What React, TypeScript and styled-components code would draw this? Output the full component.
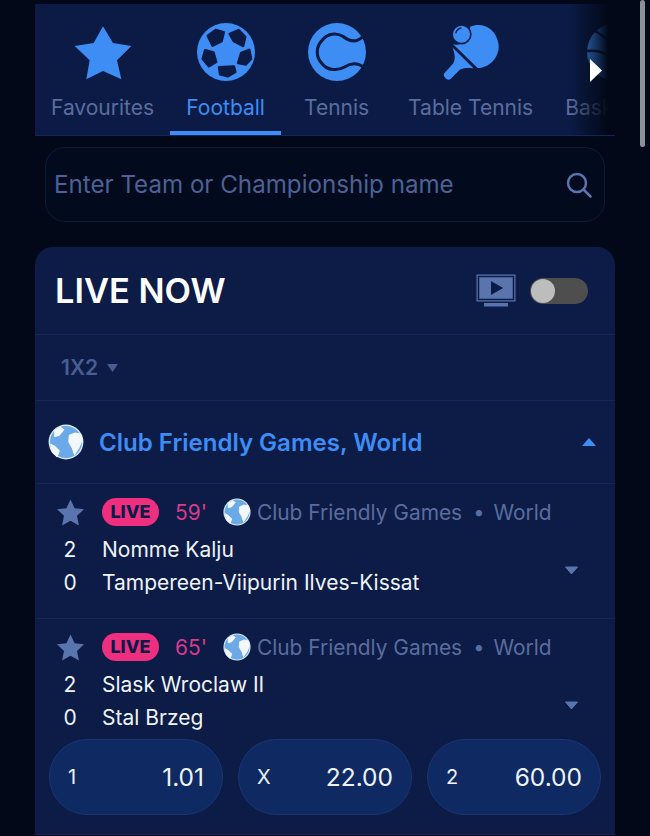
import React from "react";
import styled, { createGlobalStyle } from "styled-components";

const Global = createGlobalStyle`
  html, body {
    margin: 0;
    background: #020817;
    font-family: Inter, "Liberation Sans", sans-serif;
  }
  * {
    box-sizing: border-box;
  }
`;

const Page = styled.div`
  position: relative;
  width: 650px;
  height: 836px;
  overflow: hidden;
  padding: 4px 35px 0;
  background: #020817;
`;

const Scrollbar = styled.div`
  position: absolute;
  top: 0;
  right: 5px;
  width: 5px;
  height: 147px;
  border-radius: 3px;
  background: #8b8f9e;
`;

const TabsWrap = styled.div`
  position: relative;
  height: 132px;
  overflow: hidden;
  background: #0b1b45;
  border-bottom: 1px solid #13265a;
`;

const Tabs = styled.div`
  display: flex;
  width: 800px;
  height: 100%;
`;

const Tab = styled.div<{ $active?: boolean }>`
  display: flex;
  flex-direction: column;
  align-items: center;
  flex: none;
  min-width: 111px;
  height: 100%;
  padding: 19px 16px 0;
  font-size: 21px;
  line-height: 24px;
  color: ${(props) => (props.$active ? "#3d8df5" : "#5a6d9e")};
  border-bottom: 4px solid ${(props) => (props.$active ? "#3d8df5" : "transparent")};
`;

const TabIcon = styled.svg`
  display: block;
  width: 58px;
  height: 58px;
  margin-bottom: 15px;
`;

const Fade = styled.div`
  position: absolute;
  top: 0;
  right: 0;
  bottom: 0;
  width: 45px;
  background: linear-gradient(to right, rgba(2, 8, 23, 0), #020817 85%);
`;

const Cursor = styled.svg`
  position: absolute;
  left: 555px;
  top: 55px;
  width: 12px;
  height: 23px;
`;

const Search = styled.div`
  display: flex;
  align-items: center;
  justify-content: space-between;
  height: 75px;
  margin: 11px 10px 25px;
  padding: 0 12px 0 8px;
  border: 1px solid #0c1b3d;
  border-radius: 20px;
  background: #020a1e;
  font-size: 24.15px;
  color: #4d6194;
`;

const Card = styled.div`
  border-radius: 18px 18px 0 0;
  background: #0c1c47;
`;

const Header = styled.div`
  display: flex;
  align-items: center;
  height: 88px;
  padding: 0 27px 0 20px;
  border-bottom: 1px solid #14275c;
`;

const Title = styled.div`
  flex: 1;
  font-size: 34.4px;
  font-weight: 600;
  color: #fff;
`;

const Toggle = styled.div`
  display: flex;
  align-items: center;
  width: 58px;
  height: 26px;
  margin-left: 14px;
  padding-left: 1px;
  border-radius: 13px;
  background: #4e4e4e;
`;

const Knob = styled.div`
  width: 24px;
  height: 24px;
  border-radius: 50%;
  background: #bdbdbd;
`;

const Market = styled.div`
  display: flex;
  align-items: center;
  gap: 9px;
  height: 66px;
  padding-left: 26px;
  border-bottom: 1px solid #14275c;
  font-size: 21px;
  font-weight: 600;
  color: #4a5d90;
`;

const League = styled.div`
  display: flex;
  align-items: center;
  height: 83px;
  padding: 0 19px 0 13px;
  border-bottom: 1px solid #14275c;
`;

const LeagueName = styled.div`
  flex: 1;
  margin-left: 15px;
  font-size: 24.05px;
  font-weight: 600;
  color: #3d8df5;
`;

const Match = styled.div`
  padding: 14px 0 19px;
  border-bottom: 1px solid #14275c;
`;

const Meta = styled.div`
  display: flex;
  align-items: center;
  height: 28px;
  margin-bottom: 7px;
  font-size: 20.9px;
  color: #5a6d9e;
`;

const StarCell = styled.div`
  display: flex;
  justify-content: center;
  width: 64px;
  margin-left: 3px;
`;

const LiveBadge = styled.div`
  width: 57px;
  height: 28px;
  border-radius: 14px;
  background: #ee2f7f;
  color: #0b1b47;
  font-size: 18px;
  font-weight: 800;
  line-height: 28px;
  text-align: center;
`;

const Minute = styled.div`
  margin: 0 16px 0 16px;
  color: #d93a8c;
`;

const ChampName = styled.span`
  margin-left: 6px;
`;

const Dot = styled.span`
  margin: 0 9px 0 11px;
  font-size: 20px;
`;

const Teams = styled.div`
  display: flex;
  align-items: center;
`;

const TeamList = styled.div`
  flex: 1;
`;

const Team = styled.div`
  display: flex;
  align-items: center;
  height: 33px;
  font-size: 21px;
  color: #eef2fb;
`;

const Score = styled.div`
  width: 64px;
  margin-left: 3px;
  text-align: center;
`;

const Odds = styled.div`
  display: grid;
  grid-template-columns: repeat(3, 174px);
  gap: 15px;
  margin: 5px 14px 0;
`;

const Odd = styled.div`
  display: flex;
  align-items: center;
  justify-content: space-between;
  height: 76px;
  padding: 0 18px;
  border: 1px solid #1a3572;
  border-radius: 38px;
  background: #0f2a62;
  color: #eef2fb;
  font-size: 24.5px;
`;

const OddLabel = styled.span`
  font-size: 20px;
`;

const Chevron = styled.svg`
  display: block;
  width: 15px;
  height: 9px;
  margin: 8px 36px 0 0;
`;

function Globe(props: { size: number }) {
  return (
    <svg width={props.size} height={props.size} viewBox="0 0 32 32" style={{ flex: "none" }}>
      <circle cx="16" cy="16" r="15.5" fill="#d5e6f8" />
      <circle cx="16" cy="16" r="14.2" fill="#6ba9e8" />
      <g fill="#f3f8fe" stroke="#f3f8fe" strokeWidth="1" strokeLinejoin="round">
        <path d="M19 10l5-2 5 1 1.500 5-3 7-4 6-2-6-3-5z" />
        <path d="M6 6l5-3 3 2-4 5-4 1z" />
        <path d="M2.500 18l3.500 2 4 4-2 5-4-4z" />
      </g>
    </svg>
  );
}

const Star = (props: { size: number; color: string }) => (
  <svg width={props.size} height={props.size} viewBox="0 0 56 54" style={{ display: "block" }}>
    <path d="M28 0l8.500 18 19.500 2-14.500 14 4 20-17.500-10-17.500 10 4-20L0 20l19.500-2z" fill={props.color} />
  </svg>
);

function MatchRow(props: { minute: string; home: string; away: string; homeScore: number; awayScore: number }) {
  return (
    <>
      <Meta>
        <StarCell>
          <Star size={27} color="#5a74ad" />
        </StarCell>
        <LiveBadge>LIVE</LiveBadge>
        <Minute>{props.minute}</Minute>
        <Globe size={28} />
        <ChampName>Club Friendly Games</ChampName>
        <Dot>•</Dot>
        <span>World</span>
      </Meta>
      <Teams>
        <TeamList>
          <Team>
            <Score>{props.homeScore}</Score>
            {props.home}
          </Team>
          <Team>
            <Score>{props.awayScore}</Score>
            {props.away}
          </Team>
        </TeamList>
        <Chevron viewBox="0 0 15 9">
          <path d="M1.500 1h12L7.500 8z" fill="#5a74ad" stroke="#5a74ad" strokeLinejoin="round" />
        </Chevron>
      </Teams>
    </>
  );
}

const BLUE = "#3d8df5";
const NAVY = "#0b1b45";

export default function App() {
  return (
    <Page>
      <Global />
      <Scrollbar />
      <TabsWrap>
        <Tabs>
          <Tab>
            <TabIcon viewBox="218 68 174 174">
              <path d="M305 78L335 128L390 137L347 180L360 237L305 212L255 237L265 180L220 137L277 128Z" fill={BLUE} />
            </TabIcon>
            Favourites
          </Tab>
          <Tab $active>
            <TabIcon viewBox="590 70 170 170">
              <circle cx="675" cy="155" r="85" fill={BLUE} />
              <g fill={NAVY} stroke={NAVY} strokeWidth="8" strokeLinejoin="round">
                <path d="M622 108L645 91L668 97L662 123L636 136Z" />
                <path d="M686 102L712 91L731 111L725 137L698 123Z" />
                <path d="M614 150L638 157L646 184L625 196L607 175Z" />
                <path d="M743 149L748 175L733 191L711 187L720 158Z" />
                <path d="M655 200L698 198L702 213L680 226L658 220Z" />
              </g>
            </TabIcon>
            Football
          </Tab>
          <Tab>
            <TabIcon viewBox="43 25 170 170">
              <circle cx="128" cy="110" r="85" fill={BLUE} />
              <path
                d="M202 66C182 86 160 76 145 64C125 52 100 56 85 75C65 95 65 125 85 145C100 164 130 166 150 154C165 144 185 138 207 155"
                fill="none"
                stroke={NAVY}
                strokeWidth="9"
              />
            </TabIcon>
            Tennis
          </Tab>
          <Tab>
            <TabIcon viewBox="30 20 175 180">
              <path d="M115 32C150 15 195 35 203 85C208 125 175 160 138 160L62 86C82 92 115 80 115 32Z" fill={BLUE} />
              <path d="M60 96L126 161C110 160 95 158 82 166L55 193C48 199 42 196 37 190C32 184 31 178 38 172L62 146C70 132 68 118 60 96Z" fill={BLUE} />
              <circle cx="88" cy="55" r="29" fill={BLUE} stroke={NAVY} strokeWidth="5" />
              <path d="M70 52C72 42 78 37 88 35" fill="none" stroke={NAVY} strokeWidth="4" />
            </TabIcon>
            Table Tennis
          </Tab>
          <Tab>
            <TabIcon viewBox="0 0 58 58">
              <circle cx="29" cy="29" r="29" fill={BLUE} />
              <path d="M8 8C20 14 40 34 46 54M0 28C14 26 30 32 36 58M28 0C34 14 40 28 58 30" fill="none" stroke={NAVY} strokeWidth="2.500" />
            </TabIcon>
            Basketball
          </Tab>
        </Tabs>
        <Fade />
        <Cursor viewBox="0 0 12 23">
          <path d="M0 0l12 11.500L0 23z" fill="#fff" />
        </Cursor>
      </TabsWrap>
      <Search>
        Enter Team or Championship name
        <svg width="26" height="26" viewBox="0 0 26 26" fill="none" stroke="#5a74ad" strokeWidth="2.500" strokeLinecap="round">
          <circle cx="11" cy="11" r="9" />
          <path d="M18 18l6.500 6.500" />
        </svg>
      </Search>
      <Card>
        <Header>
          <Title>LIVE NOW</Title>
          <svg width="40" height="33" viewBox="0 0 40 33">
            <rect x="1" y="1" width="38" height="26" fill="#5a74ad" stroke="#5a74ad" />
            <rect x="2.500" y="2.500" width="35" height="23" fill="none" stroke={NAVY} strokeWidth="1.500" />
            <path d="M15 7l12 7-12 7z" fill={NAVY} />
            <rect x="8" y="29" width="24" height="3.500" fill="#5a74ad" />
          </svg>
          <Toggle>
            <Knob />
          </Toggle>
        </Header>
        <Market>
          1X2
          <svg width="11" height="8" viewBox="0 0 11 8">
            <path d="M0 0h11L5.500 8z" fill="#4a5d90" />
          </svg>
        </Market>
        <League>
          <Globe size={36} />
          <LeagueName>Club Friendly Games, World</LeagueName>
          <svg width="14" height="8" viewBox="0 0 14 8">
            <path d="M7 0l7 8H0z" fill={BLUE} />
          </svg>
        </League>
        <Match>
          <MatchRow minute="59'" home="Nomme Kalju" away="Tampereen-Viipurin Ilves-Kissat" homeScore={2} awayScore={0} />
        </Match>
        <Match>
          <MatchRow minute="65'" home="Slask Wroclaw II" away="Stal Brzeg" homeScore={2} awayScore={0} />
          <Odds>
            <Odd>
              <OddLabel>1</OddLabel>1.01
            </Odd>
            <Odd>
              <OddLabel>X</OddLabel>22.00
            </Odd>
            <Odd>
              <OddLabel>2</OddLabel>60.00
            </Odd>
          </Odds>
        </Match>
      </Card>
    </Page>
  );
}
